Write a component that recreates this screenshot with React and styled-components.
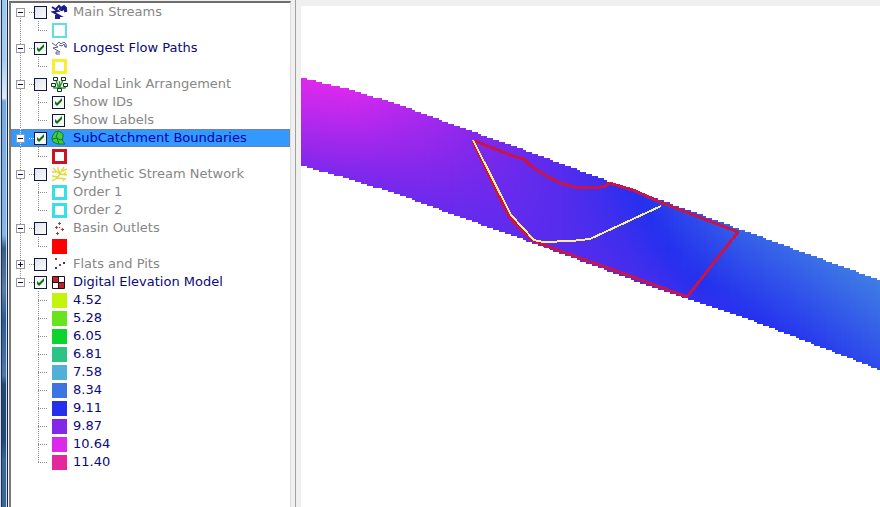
import React from "react";
import styled, { createGlobalStyle, css } from "styled-components";

const GlobalStyle = createGlobalStyle`
  body {
    margin: 0;
    background: #f0f0f0;
    font-family: "DejaVu Sans", Verdana, sans-serif;
    font-size: 13px;
  }
`;

const Window = styled.div`
  display: flex;
  height: 100vh;
  overflow: hidden;
`;

const WindowFrame = styled.div`
  flex: none;
  width: 9px;
  background: linear-gradient(
      to right,
      #d4dce6 0 1px,
      #1c3252 1px 2px,
      transparent 2px 6px,
      #c8dcf2 6px 7px,
      #14263c 7px 8px,
      #f4f6f8 8px 9px
    ),
    linear-gradient(
      #9cc4f0 0,
      #a8caf0 60px,
      #e0eaf8 98px,
      #74a8e2 101px,
      #84b6ec 235px,
      #3c5c88 248px,
      #5c7ca8 290px,
      #2c5a94 320px,
      #5078ac 375px,
      #244878 385px,
      #244878 440px,
      #3c6498 460px,
      #3c6498 100%
    );
`;

const LayerPanel = styled.aside`
  flex: none;
  box-sizing: border-box;
  width: 282px;
  margin-top: 1px;
  border-top: 2px solid #6e6e6e;
  border-left: 2px solid #7a7a7a;
  border-right: 1px solid #dcdcdc;
  background: #ffffff;
`;

const Splitter = styled.div`
  flex: none;
  width: 4px;
  border-right: 1px solid #a0a0a0;
`;

const MapPane = styled.main`
  flex: 1;
  min-width: 0;
  margin: 6px 0 0 5px;
  background: #ffffff;
  overflow: hidden;
`;

const Tree = styled.ul`
  list-style: none;
  margin: 0;
  padding: 0;
`;

const dotsDown = "repeating-linear-gradient(to bottom, var(--dots) 0 1px, transparent 1px 2px)";
const dotsAcross = "repeating-linear-gradient(to right, var(--dots) 0 1px, transparent 1px 2px)";

const Row = styled.div`
  --dots: #8c8c8c;
  display: flex;
  align-items: center;
  height: 18px;
  color: ${props => (props.$active ? "#0a0a78" : "#868686")};
  ${props =>
    props.$selected &&
    css`
      --dots: #ffffff;
      background: #3399ff;
      color: #0000a8;
      outline: 1px dotted #b07040;
      outline-offset: -1px;
    `}
`;

const RootGutter = styled.span`
  display: flex;
  align-items: center;
  flex: none;
  box-sizing: border-box;
  width: 18px;
  height: 18px;
  padding-left: 5px;
  background: ${dotsDown} no-repeat 9px ${props => (props.$first ? "9px" : "0")} / 1px
    ${props => (props.$last ? "9px" : "18px")};
`;

const RootLink = styled.span`
  flex: none;
  width: 5px;
  height: 18px;
  background: ${dotsAcross} no-repeat 0 9px / 5px 1px;
`;

const Spine = styled.span`
  flex: none;
  width: 18px;
  height: 18px;
  background: ${props => (props.$hidden ? "none" : `${dotsDown} no-repeat 9px 0 / 1px 18px`)};
`;

const Branch = styled.span`
  flex: none;
  width: 23px;
  height: 18px;
  background:
    ${dotsDown} no-repeat 9px 0 / 1px ${props => (props.$last ? "9px" : "18px")},
    ${dotsAcross} no-repeat 9px 9px / 10px 1px;
`;

const Expander = styled.button`
  display: flex;
  box-sizing: border-box;
  width: 9px;
  height: 9px;
  padding: 0;
  border: 1px solid #9a9a9a;
  background: #ffffff;
`;

const Check = styled.input`
  appearance: none;
  flex: none;
  box-sizing: border-box;
  width: 13px;
  height: 13px;
  margin: 0;
  border: 1px solid #0c1840;
  background: linear-gradient(135deg, #e2e4ea, #fafafc);
  &:checked {
    background: url("data:image/svg+xml,%3Csvg xmlns='http://www.w3.org/2000/svg' viewBox='0 0 11 11'%3E%3Cpath d='M2 4v3l2 2 5-5V1L4 6z' fill='%23107010'/%3E%3C/svg%3E")
      #f6f7f9;
  }
`;

const IconCell = styled.span`
  display: flex;
  flex: none;
  justify-content: center;
  width: 17px;
  margin: 0 5px 0 4px;
`;

const SymbolCell = styled.span`
  display: flex;
  flex: none;
  width: 21px;
`;

const Swatch = styled.span`
  box-sizing: border-box;
  width: 15px;
  height: 15px;
  border: ${props => props.$line || 0}px solid ${props => props.$color};
  background: ${props => (props.$line ? "#ffffff" : props.$color)};
`;

const Label = styled.label`
  line-height: 18px;
  white-space: nowrap;
`;

const MapDrawing = styled.svg`
  display: block;
`;

const Icon = ({ children }) => (
  <svg width="17" height="16" viewBox="0 0 17 16" fill="none">
    {children}
  </svg>
);

const StreamIcon = ({ color, width }) => (
  <Icon>
    <path d="M1 3l6 4-5 1 7 4-4 0 0 2 4 0" stroke={color} strokeWidth={width} />
    <path d="M5 5l3-3 2 2 3-2 2 2v4M8 5l3 1 2-2 1 3 2-1" stroke={color} strokeWidth={width} />
  </Icon>
);

const NodeIcon = () => (
  <Icon>
    <path d="M5 4l3 9 4-9M2 9l1 3h11l1-3M8.500 5v9" stroke="#2c9a34" strokeWidth="1.500" />
    <path
      d="M2.500 1.500h4v3h-4zM10.500 1.500h4v3h-4zM.5 7.500h4v3h-4zM12.500 7.500h4v3h-4zM6.500 12.500h4v3h-4z"
      fill="#fff"
      stroke="#0c3c14"
    />
  </Icon>
);

const CatchmentIcon = () => (
  <Icon>
    <path d="M2 5l2-3 4-1 4 3v4l-1 2 3 4H7l-5-2-1-4z" fill="#44cc44" stroke="#127a20" />
    <path d="M7 2l-2 5 4 3 3-1M1 9l5-1 2 6" stroke="#127a20" />
  </Icon>
);

const NetworkIcon = () => (
  <Icon>
    <path
      d="M1 15l5-3 3-4 2-4 2-3M6 12l9 1M9 8l7 1M1 10l6 1M2 2l3 3 4 3M1 6l4 0M7 1l0 3 2 3M11 5l5-2M11 12l2 3M13 9l2-3"
      stroke="#e4d838"
      strokeWidth="1.400"
    />
  </Icon>
);

const OutletIcon = () => (
  <Icon>
    <path
      d="M7 3.500h3M8.500 2v3M4 7.500h3M5.500 6v3M10 9.500h3M11.500 8v3M5 13.500h3M6.500 12v3M8 7.500h1"
      stroke="#a83a3a"
    />
  </Icon>
);

const PitIcon = () => (
  <Icon>
    <path d="M4 2h2v2H4zM8 8h2v2H8z" fill="#a83a3a" />
    <path d="M12 6h2v2h-2zM4 11h2v2H4z" fill="#4a3060" />
  </Icon>
);

const GridIcon = () => (
  <Icon>
    <path d="M2 2h12v12H2z" fill="#fff" />
    <path d="M2 2h6v6H2zM8 8h6v6H8z" fill="#c4202c" />
    <path d="M1.500 2.500h12v12h-12zM7.500 2v12M2 8.500h12" stroke="#201010" />
  </Icon>
);

const layers = [
  {
    name: "Main Streams",
    icon: <StreamIcon color="#1c1c8c" width={2} />,
    items: [{ color: "#5fdfe4", line: 2 }]
  },
  {
    name: "Longest Flow Paths",
    icon: <StreamIcon color="#5c5c9c" width={1} />,
    checked: true,
    items: [{ color: "#f8f02c", line: 3 }]
  },
  {
    name: "Nodal Link Arrangement",
    icon: <NodeIcon />,
    items: [
      { name: "Show IDs", check: true },
      { name: "Show Labels", check: true }
    ]
  },
  {
    name: "SubCatchment Boundaries",
    icon: <CatchmentIcon />,
    checked: true,
    selected: true,
    items: [{ color: "#cc1420", line: 3 }]
  },
  {
    name: "Synthetic Stream Network",
    icon: <NetworkIcon />,
    items: [
      { name: "Order 1", color: "#38dfe4", line: 3 },
      { name: "Order 2", color: "#38dfe4", line: 3 }
    ]
  },
  { name: "Basin Outlets", icon: <OutletIcon />, items: [{ color: "#ff0000" }] },
  { name: "Flats and Pits", icon: <PitIcon />, collapsed: true, items: [] },
  {
    name: "Digital Elevation Model",
    icon: <GridIcon />,
    checked: true,
    items: [
      { name: "4.52", color: "#c4f40c" },
      { name: "5.28", color: "#68e41c" },
      { name: "6.05", color: "#0cd42c" },
      { name: "6.81", color: "#2cc484" },
      { name: "7.58", color: "#50b0d8" },
      { name: "8.34", color: "#3c74e4" },
      { name: "9.11", color: "#2430ec" },
      { name: "9.87", color: "#8428e8" },
      { name: "10.64", color: "#dc28ec" },
      { name: "11.40", color: "#e4289c" }
    ]
  }
];

const LayerItem = ({ item, id, active, last, lastLayer }) => (
  <Row as="li" $active={active}>
    <Spine $hidden={lastLayer} />
    <Branch $last={last} />
    <SymbolCell>
      {item.check ? (
        <Check type="checkbox" id={id} defaultChecked />
      ) : (
        <Swatch $color={item.color} $line={item.line} />
      )}
    </SymbolCell>
    {item.name && (
      <Label as={item.check ? "label" : "span"} htmlFor={item.check ? id : undefined}>
        {item.name}
      </Label>
    )}
  </Row>
);

const Layer = ({ layer, index }) => {
  const id = `layer-${index}`;
  const lastLayer = index === layers.length - 1;
  return (
    <li>
      <Row $active={layer.checked} $selected={layer.selected}>
        <RootGutter $first={index === 0} $last={lastLayer}>
          <Expander
            aria-label={`${layer.collapsed ? "Expand" : "Collapse"} ${layer.name}`}
            aria-expanded={!layer.collapsed}
          >
            <svg width="7" height="7" shapeRendering="crispEdges">
              <path d={layer.collapsed ? "M1 3h5v1H1zM3 1h1v5H3z" : "M1 3h5v1H1z"} fill="#101040" />
            </svg>
          </Expander>
        </RootGutter>
        <RootLink />
        <Check type="checkbox" id={id} defaultChecked={layer.checked} />
        <IconCell>{layer.icon}</IconCell>
        <Label htmlFor={id}>{layer.name}</Label>
      </Row>
      <Tree>
        {layer.items.map((item, i) => (
          <LayerItem
            key={i}
            item={item}
            id={`${id}-${i}`}
            active={layer.checked}
            last={i === layer.items.length - 1}
            lastLayer={lastLayer}
          />
        ))}
      </Tree>
    </li>
  );
};

const ramp = [
  [7.58, [80, 176, 216]],
  [8.34, [60, 116, 230]],
  [9.11, [36, 48, 238]],
  [9.87, [132, 40, 236]],
  [10.64, [222, 40, 238]],
  [11.4, [228, 40, 156]]
];

// distance along the reach, top edge, bottom edge, elevation at each edge
const profile = [
  [0, 72, 160, 10.68, 9.85],
  [50, 84, 174, 10.6, 9.77],
  [100, 100, 190, 10.3, 9.7],
  [160, 122, 212, 9.96, 9.62],
  [200, 136, 226, 9.76, 9.58],
  [260, 158, 248, 9.5, 9.5],
  [330, 184, 274, 9.14, 9.4],
  [386, 204, 293, 8.8, 9.25],
  [440, 224, 311, 8.55, 9.14],
  [500, 246, 334, 8.42, 9.02],
  [580, 275, 365, 8.22, 8.8]
];

const elevationColor = z => {
  const i = Math.max(1, ramp.findIndex(([level]) => level >= z));
  const [z0, from] = ramp[i - 1];
  const [z1, to] = ramp[i];
  const t = (z - z0) / (z1 - z0);
  return `rgb(${from.map((c, k) => Math.round(c + (to[k] - c) * t)).join(",")})`;
};

const sampleProfile = x => {
  const i = Math.max(1, profile.findIndex(([px]) => px >= x));
  const from = profile[i - 1];
  const to = profile[i];
  const t = (x - from[0]) / (to[0] - from[0]);
  return from.map((v, k) => v + (to[k] - v) * t);
};

const columns = Array.from({ length: 193 }, (_, i) => {
  const [x, top, bottom, zTop, zBottom] = sampleProfile(i * 3);
  return {
    x,
    top: Math.round(top / 2) * 2,
    bottom: Math.round(bottom / 2) * 2,
    colors: [0, 0.25, 0.5, 0.75, 1].map(t => elevationColor(zTop + (zBottom - zTop) * t))
  };
});

const ElevationMap = () => (
  <MapDrawing width="579" height="501" viewBox="0 0 579 501" role="img" aria-label="Elevation map">
    <defs>
      {columns.map((column, i) => (
        <linearGradient key={i} id={`dem-${i}`} x1="0" y1="0" x2="0" y2="1">
          {column.colors.map((color, k) => (
            <stop key={k} offset={k / 4} stopColor={color} />
          ))}
        </linearGradient>
      ))}
    </defs>
    <g shapeRendering="crispEdges">
      {columns.map((column, i) => (
        <rect
          key={i}
          x={column.x}
          y={column.top}
          width="3"
          height={column.bottom - column.top}
          fill={`url(#dem-${i})`}
        />
      ))}
    </g>
    <g fill="none" strokeWidth="2" strokeLinejoin="round" shapeRendering="crispEdges">
      <path
        d="M174 135L212 150L223 153L229 159L242 168L259 177L274 181L294 182L305 180L308 177L332 184L359 196L437 226L386 291L329 270L237 237L231 234L210 213L204 203L172 136Z"
        stroke="#c8144c"
        strokeWidth="3"
      />
      <path
        d="M172 134L210 209L233 234L242 236L271 235L289 233L360 200"
        stroke="#f6f08c"
      />
    </g>
  </MapDrawing>
);

const App = () => {
  return (
    <>
      <GlobalStyle />
      <Window>
        <WindowFrame />
        <LayerPanel>
          <Tree>
            {layers.map((layer, i) => (
              <Layer key={layer.name} layer={layer} index={i} />
            ))}
          </Tree>
        </LayerPanel>
        <Splitter />
        <MapPane>
          <ElevationMap />
        </MapPane>
      </Window>
    </>
  );
};

export default App;
